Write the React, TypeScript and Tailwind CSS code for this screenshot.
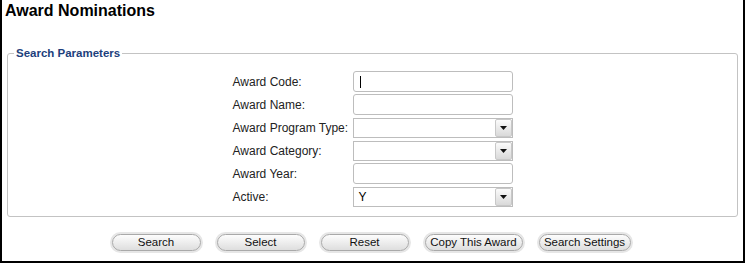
import React from "react";

function Arrow() {
  return (
    <div className="absolute right-0 top-0 bottom-0 w-[17px] rounded-[2px] border border-[#c8c8c8] bg-gradient-to-b from-[#fbfbfb] to-[#d9d9d9] flex items-center justify-center">
      <svg width="7" height="4" viewBox="0 0 7 4">
        <polygon points="0,0 7,0 3.5,4" fill="#111" />
      </svg>
    </div>
  );
}

function TextBox({ caret }: { caret?: boolean }) {
  return (
    <div className="relative h-[21px] w-[160px] rounded-[3px] border border-[#bdbdbd] bg-white">
      {caret && <div className="absolute left-[6px] top-[4px] h-[12px] w-px bg-black" />}
    </div>
  );
}

function SelectBox({ value }: { value?: string }) {
  return (
    <div className="relative h-[20px] w-[160px] border border-[#bdbdbd] bg-white">
      {value && (
        <span className="absolute left-[5px] top-[2px] text-[12px] leading-[14px] text-black">{value}</span>
      )}
      <Arrow />
    </div>
  );
}

function Btn({ label, w }: { label: string; w: string }) {
  return (
    <div className={`${w} h-[21px] rounded-full border-2 border-[#e6e6e6] bg-[#f2f2f2]`}>
      <div className="h-full w-full rounded-full border border-[#a9a9a9] bg-gradient-to-b from-[#fdfdfd] to-[#dedede] flex items-center justify-center text-[11.5px] text-[#111]">
        {label}
      </div>
    </div>
  );
}

export default function App() {
  const rows: { label: string; el: React.ReactNode }[] = [
    { label: "Award Code:", el: <TextBox caret /> },
    { label: "Award Name:", el: <TextBox /> },
    { label: "Award Program Type:", el: <SelectBox /> },
    { label: "Award Category:", el: <SelectBox /> },
    { label: "Award Year:", el: <TextBox /> },
    { label: "Active:", el: <SelectBox value="Y" /> },
  ];
  return (
    <div
      className="w-[745px] h-[263px] border-l-2 border-r-2 border-b-2 border-black bg-white flex flex-col"
      style={{ fontFamily: "'Liberation Sans', Arial, sans-serif" }}
    >
      <h1 className="pl-[3px] pt-[1px] text-[16px] leading-[19px] font-bold text-black">Award Nominations</h1>
      <fieldset className="mx-[5px] mt-[26px] rounded-[3px] border border-[#c3c3c3] px-0 pt-[10px] pb-[8px]">
        <legend className="ml-[6px] px-[2px] text-[11.5px] font-bold leading-[14px] text-[#1d3f7c]">
          Search Parameters
        </legend>
        <div className="flex justify-center">
          <div className="grid grid-cols-[120px_160px]">
            {rows.map((r) => (
              <React.Fragment key={r.label}>
                <div className="h-[23px] flex items-center text-[12px] text-[#222]">{r.label}</div>
                <div className="h-[23px] flex items-center">{r.el}</div>
              </React.Fragment>
            ))}
          </div>
        </div>
      </fieldset>
      <div className="mt-[15px] flex justify-center gap-[12px] pr-[3px]">
        <Btn label="Search" w="w-[93px]" />
        <Btn label="Select" w="w-[92px]" />
        <Btn label="Reset" w="w-[92px]" />
        <Btn label="Copy This Award" w="w-[102px]" />
        <Btn label="Search Settings" w="w-[96px]" />
      </div>
    </div>
  );
}
